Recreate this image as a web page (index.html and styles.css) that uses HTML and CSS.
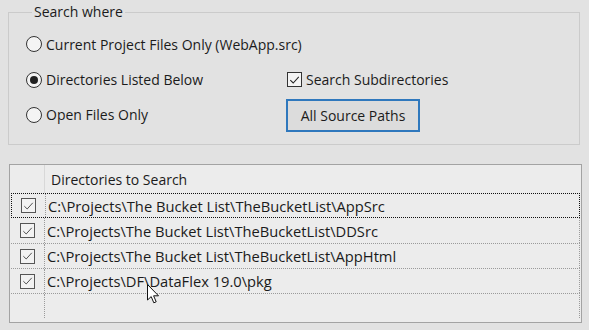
FILE: index.html
```html
<!DOCTYPE html>
<html>
<head>
<meta charset="utf-8">
<link rel="stylesheet" href="styles.css">
</head>
<body>
<fieldset class="group">
  <legend class="group-title">Search where</legend>
  <div class="options">
    <label class="opt"><span class="radio"></span><span>Current Project Files Only (WebApp.src)</span></label>
    <span></span>
    <label class="opt"><span class="radio on"></span><span>Directories Listed Below</span></label>
    <label class="opt"><span class="check"><svg viewBox="0 0 14 14" width="14" height="14"><path d="M2.5 7.2 L5.6 10.2 L11.6 3.6" fill="none" stroke="#222" stroke-width="1.1"/></svg></span><span>Search Subdirectories</span></label>
    <label class="opt"><span class="radio"></span><span>Open Files Only</span></label>
    <div class="opt"><button class="btn">All Source Paths</button></div>
  </div>
</fieldset>

<div class="list">
  <div class="hdr">
    <div class="c1"></div>
    <div class="c2">Directories to Search</div>
  </div>
  <div class="row focus">
    <div class="c1"><span class="check sm"><svg viewBox="0 0 14 14" width="14" height="14"><path d="M2.5 7.2 L5.6 10.2 L11.6 3.6" fill="none" stroke="#444" stroke-width="1"/></svg></span></div>
    <div class="c2">C:\Projects\The Bucket List\TheBucketList\AppSrc</div>
  </div>
  <div class="row">
    <div class="c1"><span class="check sm"><svg viewBox="0 0 14 14" width="14" height="14"><path d="M2.5 7.2 L5.6 10.2 L11.6 3.6" fill="none" stroke="#444" stroke-width="1"/></svg></span></div>
    <div class="c2">C:\Projects\The Bucket List\TheBucketList\DDSrc</div>
  </div>
  <div class="row">
    <div class="c1"><span class="check sm"><svg viewBox="0 0 14 14" width="14" height="14"><path d="M2.5 7.2 L5.6 10.2 L11.6 3.6" fill="none" stroke="#444" stroke-width="1"/></svg></span></div>
    <div class="c2">C:\Projects\The Bucket List\TheBucketList\AppHtml</div>
  </div>
  <div class="row">
    <div class="c1"><span class="check sm"><svg viewBox="0 0 14 14" width="14" height="14"><path d="M2.5 7.2 L5.6 10.2 L11.6 3.6" fill="none" stroke="#444" stroke-width="1"/></svg></span></div>
    <div class="c2">C:\Projects\DF\DataFlex 19.0\pkg</div>
  </div>
  <div class="row">
    <div class="c1"></div>
    <div class="c2"></div>
  </div>
  <svg class="cursor" width="14" height="21" viewBox="0 0 14 21"><path d="M0.5 0.5 L0.5 16 L4.2 12.6 L6.8 18.8 L9.2 17.8 L6.6 11.8 L11.5 11.8 Z" fill="#fff" stroke="#111" stroke-width="1" stroke-linejoin="round"/></svg>
</div>
</body>
</html>
```
FILE: styles.css
```css
* { box-sizing: border-box; }
html, body { margin: 0; padding: 0; }
body {
  width: 589px;
  height: 330px;
  overflow: hidden;
  background: #e2e2e2;
  font-family: "Open Sans", "Noto Sans", sans-serif;
  font-size: 14px;
  color: #1b1b1b;
  padding-top: 2px;
}
.group {
  margin: 0 9px 0 8px;
  padding: 0 0 12px 17px;
  border: 1px solid #cbcbcb;
  height: 143px;
}
.group-title {
  margin-left: 6px;
  padding: 0 2px;
  line-height: 20px;
}
.options {
  display: grid;
  grid-template-columns: 260px auto;
  grid-template-rows: 36px 35px 35px;
  padding-top: 4px;
}
.opt {
  display: flex;
  align-items: center;
  gap: 4px;
  white-space: nowrap;
}
.radio {
  width: 16px;
  height: 16px;
  border: 1px solid #333;
  border-radius: 50%;
  background: #f4f4f4;
  display: flex;
  align-items: center;
  justify-content: center;
  flex: none;
}
.radio.on::after {
  content: "";
  width: 8px;
  height: 8px;
  border-radius: 50%;
  background: #222;
}
.check {
  width: 15px;
  height: 15px;
  border: 1px solid #333;
  background: #f4f4f4;
  display: flex;
  align-items: center;
  justify-content: center;
  flex: none;
  margin-left: 1px;
}
.check svg { display: block; }
.check.sm {
  border-color: #555;
  background: #f2f2f2;
  margin: 0;
}
.btn {
  width: 134px;
  height: 33px;
  border: 2px solid #2f78bd;
  background: #dcdcdc;
  font: inherit;
  color: #1b1b1b;
  padding: 0;
  margin-top: 2px;
}
.list {
  position: relative;
  margin: 19px 7px 0 9px;
  height: 159px;
  border: 1px solid #a3a3a3;
  background: #ececec;
  padding-right: 1px;
}
.hdr {
  display: flex;
  height: 28px;
}
.hdr .c1 { border-right: 1px solid #d8d8d8; }
.hdr .c2 {
  display: flex;
  align-items: center;
  padding-left: 6px;
}
.c1 {
  width: 35px;
  flex: none;
  display: flex;
  align-items: center;
  justify-content: center;
}
.c2 { flex: 1; white-space: nowrap; }
.row {
  display: flex;
  height: 25px;
  border-top: 1px dotted #9a9a9a;
  border-right: 1px dotted #9a9a9a;
  margin-left: 1px;
}
.row .c1 {
  border-right: 1px dotted #9a9a9a;
  width: 34px;
}
.row .c2 {
  display: flex;
  align-items: center;
  padding-left: 2px;
  font-size: 14.7px;
}
.row.focus {
  border: 1px dotted #111;
  margin-left: 1px;
}
.row.focus + .row { border-top: none; }
.cursor {
  position: absolute;
  left: 137px;
  top: 119px;
}
```
